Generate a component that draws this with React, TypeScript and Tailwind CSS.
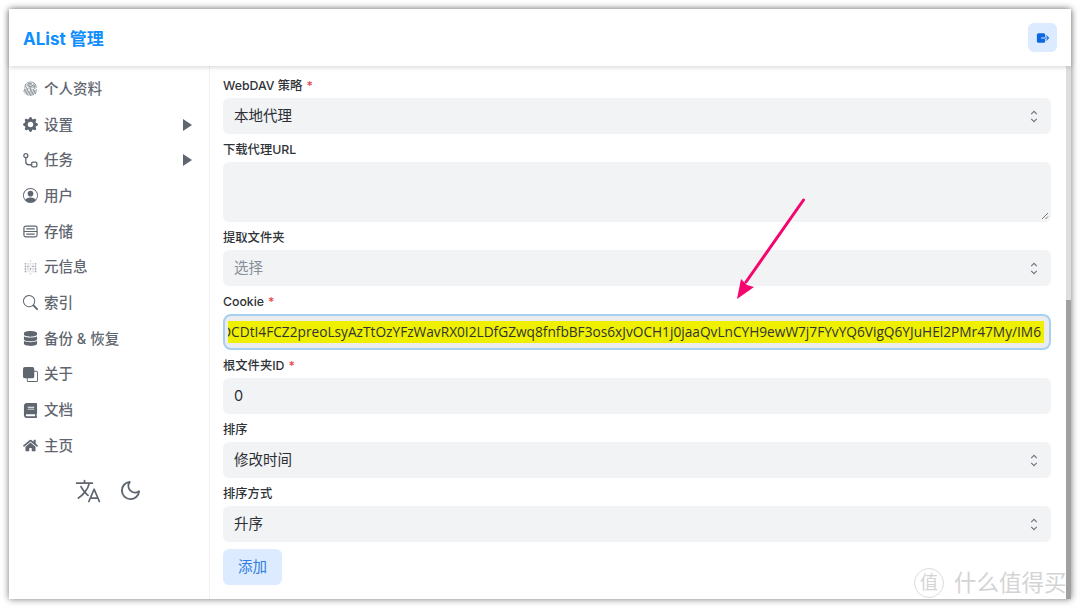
import type { ReactNode } from 'react';
import { BsFingerprint, BsFront, BsGearFill, BsPersonCircle, BsSearch } from 'react-icons/bs';
import { FaBook, FaDatabase, FaHome } from 'react-icons/fa';
import { FiMoon } from 'react-icons/fi';
import { IoExit, IoLanguageOutline } from 'react-icons/io5';
import { SiMetabase } from 'react-icons/si';

const FONT = "font-['Inter','Noto_Sans_CJK_SC',sans-serif]";
const COOKIE =
  'OCDtI4FCZ2preoLsyAzTtOzYFzWavRX0I2LDfGZwq8fnfbBF3os6xJvOCH1j0jaaQvLnCYH9ewW7j7FYvYQ6VigQ6YJuHEl2PMr47My/IM6';

function TaskIcon() {
  return (
    <svg viewBox="0 0 16 16" className="h-[15px] w-[15px]" fill="none" stroke="currentColor" strokeWidth="1.4">
      <circle cx="3" cy="2.800" r="2.100" />
      <path d="M3 4.900v4.300a3.300 3.300 0 0 0 3.300 3.300h2.900" />
      <rect x="9.200" y="9.800" width="5.600" height="5" rx="1.400" />
    </svg>
  );
}

function StorageIcon() {
  return (
    <svg viewBox="0 0 16 16" className="h-[15px] w-[15px]" fill="none" stroke="currentColor" strokeWidth="1.300">
      <rect x="1" y="2.200" width="14" height="11.600" rx="2" />
      <path d="M1 8h14M3.500 5.200h9M3.500 10.800h9" />
    </svg>
  );
}

function Caret() {
  return (
    <svg viewBox="0 0 9 12" className="h-3 w-[9px]" fill="currentColor">
      <path d="M0 0l9 6-9 6z" />
    </svg>
  );
}

function UpDown() {
  return (
    <svg viewBox="0 0 8 14" className="h-[13px] w-2 text-[#6b7280]" fill="none" stroke="currentColor" strokeWidth="1.2">
      <path d="M1 4.500L4 1.500l3 3M1 9.500l3 3 3-3" />
    </svg>
  );
}

const menu: { label: string; icon: ReactNode; caret?: boolean }[] = [
  { label: '个人资料', icon: <BsFingerprint className="text-[#8a9099]" /> },
  { label: '设置', icon: <BsGearFill />, caret: true },
  { label: '任务', icon: <TaskIcon />, caret: true },
  { label: '用户', icon: <BsPersonCircle /> },
  { label: '存储', icon: <StorageIcon /> },
  { label: '元信息', icon: <SiMetabase className="text-[#a5a9af]" /> },
  { label: '索引', icon: <BsSearch /> },
  { label: '备份 & 恢复', icon: <FaDatabase /> },
  { label: '关于', icon: <BsFront /> },
  { label: '文档', icon: <FaBook /> },
  { label: '主页', icon: <FaHome /> },
];

function Label({ text, required }: { text: string; required?: boolean }) {
  return (
    <div className="mb-0.5 flex h-5 items-center gap-1 pt-px text-[12.3px] font-medium text-[#2f3338]">
      <span>{text}</span>
      {required && <span className="text-[#e5484d]">*</span>}
    </div>
  );
}

function SelectField({ value, placeholder }: { value: string; placeholder?: boolean }) {
  return (
    <div className="flex h-9 items-center justify-between rounded-md bg-[#f1f3f5] pl-[11px] pr-[13px] text-[14.5px]">
      <span className={placeholder ? 'text-[#868e96]' : 'text-[#2b2f33]'}>{value}</span>
      <UpDown />
    </div>
  );
}

export default function App() {
  return (
    <div className={`relative h-[608px] w-[1080px] overflow-hidden bg-white p-[9px] ${FONT}`}>
      <div className="flex h-[590px] w-[1062px] flex-col bg-white shadow-[0_0_7px_rgba(0,0,0,0.55)]">
        {/* Header */}
        <header className="z-10 flex h-[57px] shrink-0 items-center justify-between bg-white px-3.5 shadow-[0_1px_5px_rgba(0,0,0,0.18)]">
          <h1 className="pt-1 text-[17px] font-bold text-[#0f8fff]">AList 管理</h1>
          <button className="flex h-[29px] w-[29px] items-center justify-center rounded-md bg-[#dcebff] text-[#0b68e0]">
            <IoExit className="h-[14px] w-[14px]" />
          </button>
        </header>

        <div className="flex min-h-0 flex-1">
          {/* Sidebar */}
          <aside className="w-[201px] shrink-0 border-r border-[#f1f1f1] pt-[5px]">
            {menu.map((item) => (
              <div key={item.label} className="flex h-[35.7px] items-center pl-3.5 pr-[17px] text-[14.5px] font-medium text-[#5f6670]">
                <span className="flex w-[21px] shrink-0 text-[15px]">{item.icon}</span>
                <span className="flex-1">{item.label}</span>
                {item.caret && <Caret />}
              </div>
            ))}
            <div className="mt-[13px] flex items-center justify-center gap-[17px] pr-[3px] text-[#5f6670]">
              <IoLanguageOutline className="h-7 w-7" />
              <FiMoon className="h-[23px] w-[23px]" />
            </div>
          </aside>

          {/* Form */}
          <main className="flex min-w-0 flex-1 flex-col gap-1.5 pl-[13px] pr-[15px] pt-2.5">
            <div>
              <Label text="WebDAV 策略" required />
              <SelectField value="本地代理" />
            </div>
            <div>
              <Label text="下载代理URL" />
              <div className="relative h-[60px] rounded-md bg-[#f1f3f5]">
                <svg viewBox="0 0 8 8" className="absolute bottom-0.5 right-0.5 h-2 w-2 text-[#777]" fill="none" stroke="currentColor">
                  <path d="M1 7l6-6M4.500 7L7 4.500" />
                </svg>
              </div>
            </div>
            <div>
              <Label text="提取文件夹" />
              <SelectField value="选择" placeholder />
            </div>
            <div>
              <Label text="Cookie" required />
              <div className="flex h-9 items-center rounded-lg border-2 border-[#a6d0f2] bg-[#ececec] pl-[3px] pr-[5px]">
                <div className="flex h-[22px] flex-1 justify-end overflow-hidden bg-[#eef000] pr-[3px]">
                  <span className="whitespace-nowrap font-['Open_Sans',sans-serif] text-[13.7px] leading-[22px] text-[#333]">
                    {COOKIE}
                  </span>
                </div>
              </div>
            </div>
            <div>
              <Label text="根文件夹ID" required />
              <div className="flex h-9 items-center rounded-md bg-[#f1f3f5] pl-[11px] text-[14.5px] text-[#2b2f33]">0</div>
            </div>
            <div>
              <Label text="排序" />
              <SelectField value="修改时间" />
            </div>
            <div>
              <Label text="排序方式" />
              <SelectField value="升序" />
            </div>
            <button className="mt-px h-9 w-[59px] rounded-md bg-[#dcebff] text-[14.5px] text-[#2f7de1]">添加</button>
          </main>

          {/* Scrollbar */}
          <div className="flex w-[5px] shrink-0 flex-col bg-[#dedede]">
            <div className="h-[234px]" />
            <div className="flex-1 bg-[#a0a0a0]" />
          </div>
        </div>
      </div>

      {/* Annotation arrow */}
      <svg className="absolute left-[730px] top-[190px] h-[115px] w-[85px]" viewBox="0 0 85 115" fill="none">
        <path d="M73.500 10L16 92" stroke="#f5056d" strokeWidth="3" strokeLinecap="round" />
        <path d="M7 109L11 89L17 95L24 97Z" fill="#f5056d" />
      </svg>

      {/* Watermark */}
      <div className="absolute left-[914px] top-[568px] flex items-center gap-2.5 text-[#d4d4d4]">
        <div className="flex h-[30px] w-[30px] items-center justify-center rounded-full border border-[#dcdcdc] text-lg">值</div>
        <span className="text-[22.5px] leading-[30px]">什么值得买</span>
      </div>
    </div>
  );
}
